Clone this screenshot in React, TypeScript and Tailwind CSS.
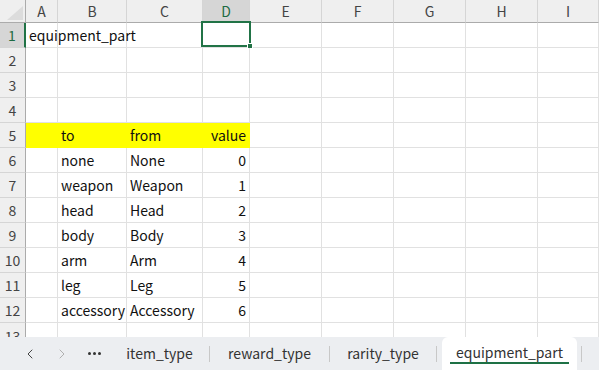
import { ChevronLeft, ChevronRight } from "lucide-react";

const cols = ["A", "B", "C", "D", "E", "F", "G", "H", "I"];

type Row = { b?: string; c?: string; d?: string; a?: string };

const rows: Row[] = [
  { a: "equipment_part" },
  {},
  {},
  {},
  { b: "to", c: "from", d: "value" },
  { b: "none", c: "None", d: "0" },
  { b: "weapon", c: "Weapon", d: "1" },
  { b: "head", c: "Head", d: "2" },
  { b: "body", c: "Body", d: "3" },
  { b: "arm", c: "Arm", d: "4" },
  { b: "leg", c: "Leg", d: "5" },
  { b: "accessory", c: "Accessory", d: "6" },
];

const font = { fontFamily: '"Noto Sans CJK JP", "Noto Sans", sans-serif' };

function Cell({ children, yellow, right, overflow }: { children?: React.ReactNode; yellow?: boolean; right?: boolean; overflow?: boolean }) {
  return (
    <div
      className={`h-[25px] flex items-center text-[14px] leading-none text-[#111] border-r border-b whitespace-nowrap ${
        overflow ? "overflow-visible relative z-10" : "overflow-hidden"
      } ${yellow ? "bg-[#ffff00] border-[#ffff00]" : "bg-white border-[#e1e1e1]"} ${right ? "justify-end pr-[3px]" : "pl-[3px]"}`}
    >
      {children}
    </div>
  );
}

export default function App() {
  return (
    <div className="w-[599px] h-[370px] bg-white overflow-hidden flex flex-col" style={font}>
      <div className="h-[337px] overflow-hidden">
        <div className="grid grid-cols-[26px_32px_69px_76px_47px_72px_72px_72px_72px_61px]">
          {/* header row */}
          <div className="h-[23px] bg-[#efefef] border-r border-b border-[#ababab] flex items-end justify-end pr-[2px] pb-[2px]">
            <svg width="16" height="14" viewBox="0 0 16 14">
              <polygon points="16,0 16,14 0,14" fill="#dcdcdc" />
            </svg>
          </div>
          {cols.map((c) => (
            <div
              key={c}
              className={`h-[23px] border-r border-b border-r-[#d5d5d5] border-b-[#ababab] flex items-center justify-center text-[14px] leading-none ${
                c === "D" ? "bg-[#d6d6d6] text-[#1e6b43]" : "bg-[#efefef] text-[#444]"
              }`}
            >
              {c}
            </div>
          ))}

          {rows.map((r, i) => {
            const n = i + 1;
            const yellow = n === 5;
            return (
              <div key={n} className="contents">
                <div
                  className={`h-[25px] border-b border-[#d5d5d5] flex items-center justify-center text-[14px] leading-none ${
                    n === 1
                      ? "bg-[#d6d6d6] text-[#1e6b43] border-r-2 border-r-[#217346]"
                      : "bg-[#efefef] text-[#444] border-r border-r-[#ababab]"
                  }`}
                >
                  {n}
                </div>
                <Cell yellow={yellow} overflow={n === 1}>{r.a}</Cell>
                <Cell yellow={yellow}>{r.b}</Cell>
                <Cell yellow={yellow}>{r.c}</Cell>
                <div className="relative">
                  <Cell yellow={yellow} right>{r.d}</Cell>
                  {n === 1 && (
                    <div className="absolute -top-[2px] -left-[2px] w-[50px] h-[26px] border-2 border-[#217346]">
                      <div className="absolute -right-[4px] -bottom-[4px] w-[6px] h-[6px] bg-[#217346] border border-white" />
                    </div>
                  )}
                </div>
                <Cell />
                <Cell />
                <Cell />
                <Cell />
                <Cell />
              </div>
            );
          })}

          <div className="h-[25px] bg-[#efefef] border-r border-[#ababab] flex items-center justify-center text-[14px] leading-none text-[#444]">
            13
          </div>
          {cols.map((c) => (
            <div key={c} className="h-[25px] bg-white border-r border-[#e1e1e1]" />
          ))}
        </div>
      </div>

      <div className="h-[33px] bg-[#eceef1] flex items-stretch pl-[14px] text-[14px] text-[#333]">
        <div className="w-[32px] flex items-center justify-center text-[#444]">
          <ChevronLeft size={16} strokeWidth={1.5} />
        </div>
        <div className="w-[32px] flex items-center justify-center text-[#b0b0b0]">
          <ChevronRight size={16} strokeWidth={1.5} />
        </div>
        <div className="w-[32px] flex items-center justify-center gap-[2px]">
          <span className="w-[3px] h-[3px] rounded-full bg-[#333]" />
          <span className="w-[3px] h-[3px] rounded-full bg-[#333]" />
          <span className="w-[3px] h-[3px] rounded-full bg-[#333]" />
        </div>
        <div className="w-[99px] flex items-center justify-center">item_type</div>
        <div className="flex items-center">
          <span className="w-px h-[16px] bg-[#c8c8c8]" />
        </div>
        <div className="w-[119px] flex items-center justify-center">reward_type</div>
        <div className="flex items-center">
          <span className="w-px h-[16px] bg-[#c8c8c8]" />
        </div>
        <div className="w-[106px] flex items-center justify-center">rarity_type</div>
        <div className="flex items-center">
          <span className="w-px h-[16px] bg-[#c8c8c8]" />
        </div>
        <div className="w-[135px] ml-[5px] bg-white rounded-t-[6px] flex flex-col items-center justify-end">
          <span className="leading-[20px]">equipment_part</span>
          <span className="w-[119px] h-[2px] bg-[#1e7145] mb-[6px]" />
        </div>
        <div className="flex items-center ml-[4px]">
          <span className="w-px h-[16px] bg-[#c8c8c8]" />
        </div>
      </div>
    </div>
  );
}
